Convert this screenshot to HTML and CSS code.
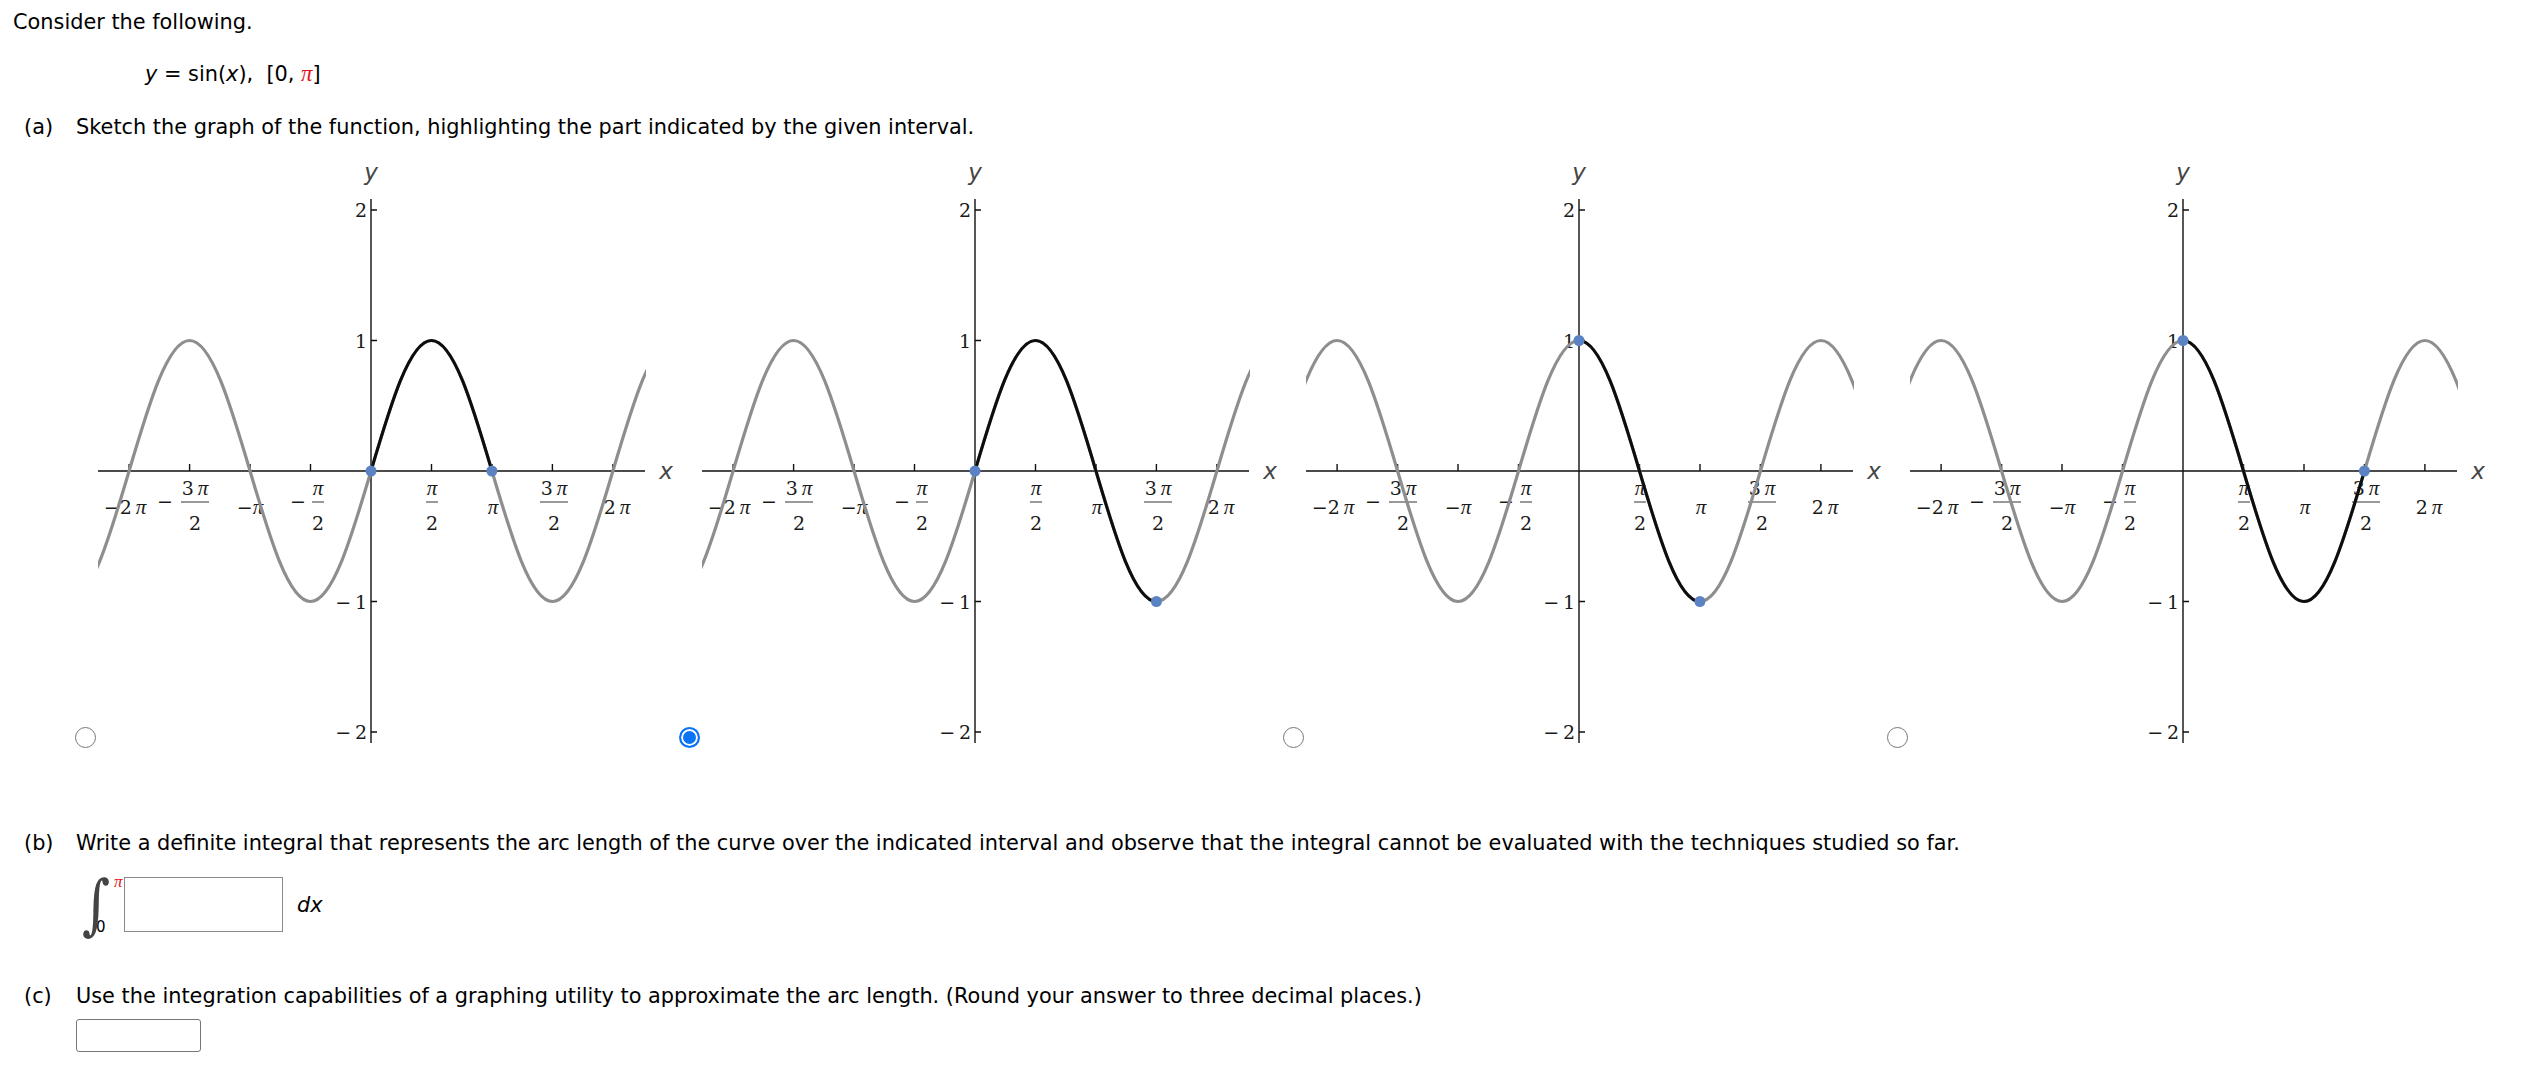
FILE: index.html
```html
<!DOCTYPE html>
<html lang="en">
<head>
<meta charset="utf-8">
<title>Arc length of sin(x)</title>
<link rel="stylesheet" href="styles.css">
</head>
<body>
<svg class="defs" width="0" height="0" aria-hidden="true">
  <defs>
    <clipPath id="plotclip"><rect x="2" y="0" width="548" height="595"/></clipPath>
    <g id="axes">
      <path class="ax" d="M2,316H549M275,44V588"/>
      <path class="ax" d="M33.1,316V309M93.6,316V309M154,316V309M214.5,316V309M335.5,316V309M396,316V309M456.4,316V309M516.9,316V309M275,55H281M275,185.5H281M275,446.5H281M275,577H281"/>
      <text class="axl" x="275" y="25" text-anchor="middle">y</text>
      <text class="axl" x="570" y="324" text-anchor="middle">x</text>
      <text class="tl" x="271" y="62" text-anchor="end">2</text>
      <text class="tl" x="271" y="192.5" text-anchor="end">1</text>
      <text class="tl" x="271" y="453.5" text-anchor="end">−&#8201;1</text>
      <text class="tl" x="271" y="584" text-anchor="end">−&#8201;2</text>
      <text class="tl" x="29" y="359" text-anchor="middle">−2&#8201;<tspan class="tpi">π</tspan></text>
      <text class="tl" x="154" y="359" text-anchor="middle">−<tspan class="tpi">π</tspan></text>
      <text class="tl" x="397" y="359" text-anchor="middle"><tspan class="tpi">π</tspan></text>
      <text class="tl" x="521" y="359" text-anchor="middle">2&#8201;<tspan class="tpi">π</tspan></text>
      <text class="tl" x="69" y="353" text-anchor="middle">−</text>
      <text class="tl" x="99" y="340" text-anchor="middle">3&#8201;<tspan class="tpi">π</tspan></text>
      <path class="bar" d="M85,347H113"/>
      <text class="tl" x="99" y="375" text-anchor="middle">2</text>
      <text class="tl" x="202" y="353" text-anchor="middle">−</text>
      <text class="tl" x="222" y="340" text-anchor="middle"><tspan class="tpi">π</tspan></text>
      <path class="bar" d="M216,347H228"/>
      <text class="tl" x="222" y="375" text-anchor="middle">2</text>
      <text class="tl" x="336" y="340" text-anchor="middle"><tspan class="tpi">π</tspan></text>
      <path class="bar" d="M330,347H342"/>
      <text class="tl" x="336" y="375" text-anchor="middle">2</text>
      <text class="tl" x="458" y="340" text-anchor="middle">3&#8201;<tspan class="tpi">π</tspan></text>
      <path class="bar" d="M444,347H472"/>
      <text class="tl" x="458" y="375" text-anchor="middle">2</text>
    </g>
  </defs>
</svg>

<div class="page">
  <p class="intro">Consider the following.</p>
  <p class="func"><span class="var">y</span> = sin(<span class="var">x</span>),&nbsp;&nbsp;[0, <span class="red-pi">π</span>]</p>

  <div class="part part-a">
    <span class="part-label">(a)</span>
    <span class="part-text">Sketch the graph of the function, highlighting the part indicated by the given interval.</span>
  </div>

  <div class="choices">
    <label class="choice">
      <input type="radio" name="graph" class="radio">
      <svg class="graph" width="583" height="595" viewBox="0 0 583 595">
        <use href="#axes"/>
        <g clip-path="url(#plotclip)">
          <g transform="matrix(38.5 0 0 -130.5 275 316)">
            <path class="c-gray" d="M-7.854,-1 C-7.2855,-1 -6.7955,-0.5123 -6.2832,0 C-5.7709,0.5123 -5.2809,1 -4.7124,1 C-4.1439,1 -3.6539,0.5123 -3.1416,0 C-2.6293,-0.5123 -2.1393,-1 -1.5708,-1 C-1.0023,-1 -0.5123,-0.5123 0,0 C0.5123,0.5123 1.0023,1 1.5708,1 C2.1393,1 2.6293,0.5123 3.1416,0 C3.6539,-0.5123 4.1439,-1 4.7124,-1 C5.2809,-1 5.7709,-0.5123 6.2832,0 C6.7955,0.5123 7.2855,1 7.854,1"/>
            <path class="c-hi" d="M0,0 C0.5123,0.5123 1.0023,1 1.5708,1 C2.1393,1 2.6293,0.5123 3.1416,0"/>
          </g>
        </g>
        <circle class="dot" cx="275" cy="316" r="5.5"/>
        <circle class="dot" cx="395.9" cy="316" r="5.5"/>
      </svg>
    </label>

    <label class="choice">
      <input type="radio" name="graph" class="radio" checked>
      <svg class="graph" width="583" height="595" viewBox="0 0 583 595">
        <use href="#axes"/>
        <g clip-path="url(#plotclip)">
          <g transform="matrix(38.5 0 0 -130.5 275 316)">
            <path class="c-gray" d="M-7.854,-1 C-7.2855,-1 -6.7955,-0.5123 -6.2832,0 C-5.7709,0.5123 -5.2809,1 -4.7124,1 C-4.1439,1 -3.6539,0.5123 -3.1416,0 C-2.6293,-0.5123 -2.1393,-1 -1.5708,-1 C-1.0023,-1 -0.5123,-0.5123 0,0 C0.5123,0.5123 1.0023,1 1.5708,1 C2.1393,1 2.6293,0.5123 3.1416,0 C3.6539,-0.5123 4.1439,-1 4.7124,-1 C5.2809,-1 5.7709,-0.5123 6.2832,0 C6.7955,0.5123 7.2855,1 7.854,1"/>
            <path class="c-hi" d="M0,0 C0.5123,0.5123 1.0023,1 1.5708,1 C2.1393,1 2.6293,0.5123 3.1416,0 C3.6539,-0.5123 4.1439,-1 4.7124,-1"/>
          </g>
        </g>
        <circle class="dot" cx="275" cy="316" r="5.5"/>
        <circle class="dot" cx="456.4" cy="446.5" r="5.5"/>
      </svg>
    </label>

    <label class="choice">
      <input type="radio" name="graph" class="radio">
      <svg class="graph" width="583" height="595" viewBox="0 0 583 595">
        <use href="#axes"/>
        <g clip-path="url(#plotclip)">
          <g transform="matrix(38.5 0 0 -130.5 275 316)">
            <path class="c-gray" d="M-7.854,0 C-7.3417,0.5123 -6.8517,1 -6.2832,1 C-5.7147,1 -5.2247,0.5123 -4.7124,0 C-4.2001,-0.5123 -3.7101,-1 -3.1416,-1 C-2.5731,-1 -2.0831,-0.5123 -1.5708,0 C-1.0585,0.5123 -0.5685,1 0,1 C0.5685,1 1.0585,0.5123 1.5708,0 C2.0831,-0.5123 2.5731,-1 3.1416,-1 C3.7101,-1 4.2001,-0.5123 4.7124,0 C5.2247,0.5123 5.7147,1 6.2832,1 C6.8517,1 7.3417,0.5123 7.854,0"/>
            <path class="c-hi" d="M0,1 C0.5685,1 1.0585,0.5123 1.5708,0 C2.0831,-0.5123 2.5731,-1 3.1416,-1"/>
          </g>
        </g>
        <circle class="dot" cx="275" cy="185.5" r="5.5"/>
        <circle class="dot" cx="395.9" cy="446.5" r="5.5"/>
      </svg>
    </label>

    <label class="choice">
      <input type="radio" name="graph" class="radio">
      <svg class="graph" width="583" height="595" viewBox="0 0 583 595">
        <use href="#axes"/>
        <g clip-path="url(#plotclip)">
          <g transform="matrix(38.5 0 0 -130.5 275 316)">
            <path class="c-gray" d="M-7.854,0 C-7.3417,0.5123 -6.8517,1 -6.2832,1 C-5.7147,1 -5.2247,0.5123 -4.7124,0 C-4.2001,-0.5123 -3.7101,-1 -3.1416,-1 C-2.5731,-1 -2.0831,-0.5123 -1.5708,0 C-1.0585,0.5123 -0.5685,1 0,1 C0.5685,1 1.0585,0.5123 1.5708,0 C2.0831,-0.5123 2.5731,-1 3.1416,-1 C3.7101,-1 4.2001,-0.5123 4.7124,0 C5.2247,0.5123 5.7147,1 6.2832,1 C6.8517,1 7.3417,0.5123 7.854,0"/>
            <path class="c-hi" d="M0,1 C0.5685,1 1.0585,0.5123 1.5708,0 C2.0831,-0.5123 2.5731,-1 3.1416,-1 C3.7101,-1 4.2001,-0.5123 4.7124,0"/>
          </g>
        </g>
        <circle class="dot" cx="275" cy="185.5" r="5.5"/>
        <circle class="dot" cx="456.4" cy="316" r="5.5"/>
      </svg>
    </label>
  </div>

  <div class="part part-b">
    <span class="part-label">(b)</span>
    <span class="part-text">Write a definite integral that represents the arc length of the curve over the indicated interval and observe that the integral cannot be evaluated with the techniques studied so far.</span>
  </div>

  <div class="integral">
    <span class="int-glyph">∫</span>
    <span class="int-limits">
      <span class="lim-up">π</span>
      <span class="lim-low">0</span>
    </span>
    <input type="text" class="int-box" aria-label="integrand">
    <span class="dx">dx</span>
  </div>

  <div class="part part-c">
    <span class="part-label">(c)</span>
    <span class="part-text">Use the integration capabilities of a graphing utility to approximate the arc length. (Round your answer to three decimal places.)</span>
  </div>

  <input type="text" class="answer" aria-label="arc length">
</div>
</body>
</html>
```

FILE: styles.css
```css
* { box-sizing: border-box; }

html, body { background: #fff; }

body {
  margin: 0;
  color: #000;
  font-family: "DejaVu Sans", Verdana, sans-serif;
  font-size: 20.85px;
  line-height: 24px;
}

.defs { display: block; width: 0; height: 0; overflow: hidden; }

.page { padding: 10px 0 0 13px; }

p { margin: 0; }

.func { margin-top: 28px; padding-left: 132px; }
.var { font-style: italic; }
.red-pi {
  color: #e3141b;
  font-family: "Liberation Serif", "DejaVu Serif", serif;
  font-style: italic;
  font-size: 23px;
}

.part { display: flex; padding-left: 11px; }
.part-label { width: 52px; flex: none; }
.part-a { margin-top: 29px; }
.part-b { margin-top: 81px; }
.part-c { margin-top: 48px; }

.choices { display: flex; margin-top: 16px; padding-left: 62px; }
.choice { display: flex; align-items: flex-end; width: 604px; flex: none; }

.radio {
  appearance: none;
  -webkit-appearance: none;
  flex: none;
  width: 21px;
  height: 21px;
  margin: 0 0 2px 0;
  border: 1.5px solid #767676;
  border-radius: 50%;
  background: #fff;
}
.radio:checked {
  border: 2px solid #0b74f5;
  background: #0b74f5;
  box-shadow: inset 0 0 0 2px #fff;
}

.graph { display: block; flex: none; width: 583px; height: 595px; overflow: visible; }

.ax { fill: none; stroke: #111; stroke-width: 1.4; }
.bar { fill: none; stroke: #555; stroke-width: 1.2; }
.tl { font-family: "DejaVu Serif", "Liberation Serif", serif; font-size: 19px; fill: #1a1a1a; }
.tpi { font-family: "Liberation Serif", serif; font-style: italic; font-size: 21px; }
.axl { font-family: "DejaVu Sans", sans-serif; font-style: italic; font-size: 23px; fill: #444; }
.c-gray { fill: none; stroke: #8e8e8e; stroke-width: 3.2; vector-effect: non-scaling-stroke; }
.c-hi { fill: none; stroke: #0d0d0d; stroke-width: 3; vector-effect: non-scaling-stroke; }
.dot { fill: #5b83c3; }

.integral { display: flex; align-items: center; height: 63px; margin: 18px 0 0 69px; }
.int-glyph {
  flex: none;
  display: block;
  width: 23px;
  height: 63px;
  font-family: "DejaVu Serif", serif;
  font-size: 54px;
  line-height: 63px;
  color: #444;
  text-align: center;
  transform: scaleY(1.22);
}
.int-limits {
  flex: none;
  display: flex;
  flex-direction: column;
  justify-content: space-between;
  width: 24px;
  height: 63px;
  margin-left: -10px;
  font-size: 15px;
  line-height: 17px;
}
.lim-up {
  margin-left: 19px;
  color: #e3141b;
  font-family: "Liberation Serif", serif;
  font-style: italic;
  font-size: 17px;
}
.lim-low { margin-left: 1px; }
.int-box {
  flex: none;
  width: 159px;
  height: 55px;
  margin: 0 0 0 5px;
  border: 1px solid #8a8a8a;
  border-radius: 0;
  background: #fff;
  padding: 0 6px;
  font: inherit;
}
.dx { margin-left: 14px; font-style: italic; }

.answer {
  display: block;
  width: 125px;
  height: 33px;
  margin: 11px 0 0 63px;
  border: 1px solid #767676;
  border-radius: 3px;
  background: #fff;
  padding: 0 6px;
  font: inherit;
}
```
